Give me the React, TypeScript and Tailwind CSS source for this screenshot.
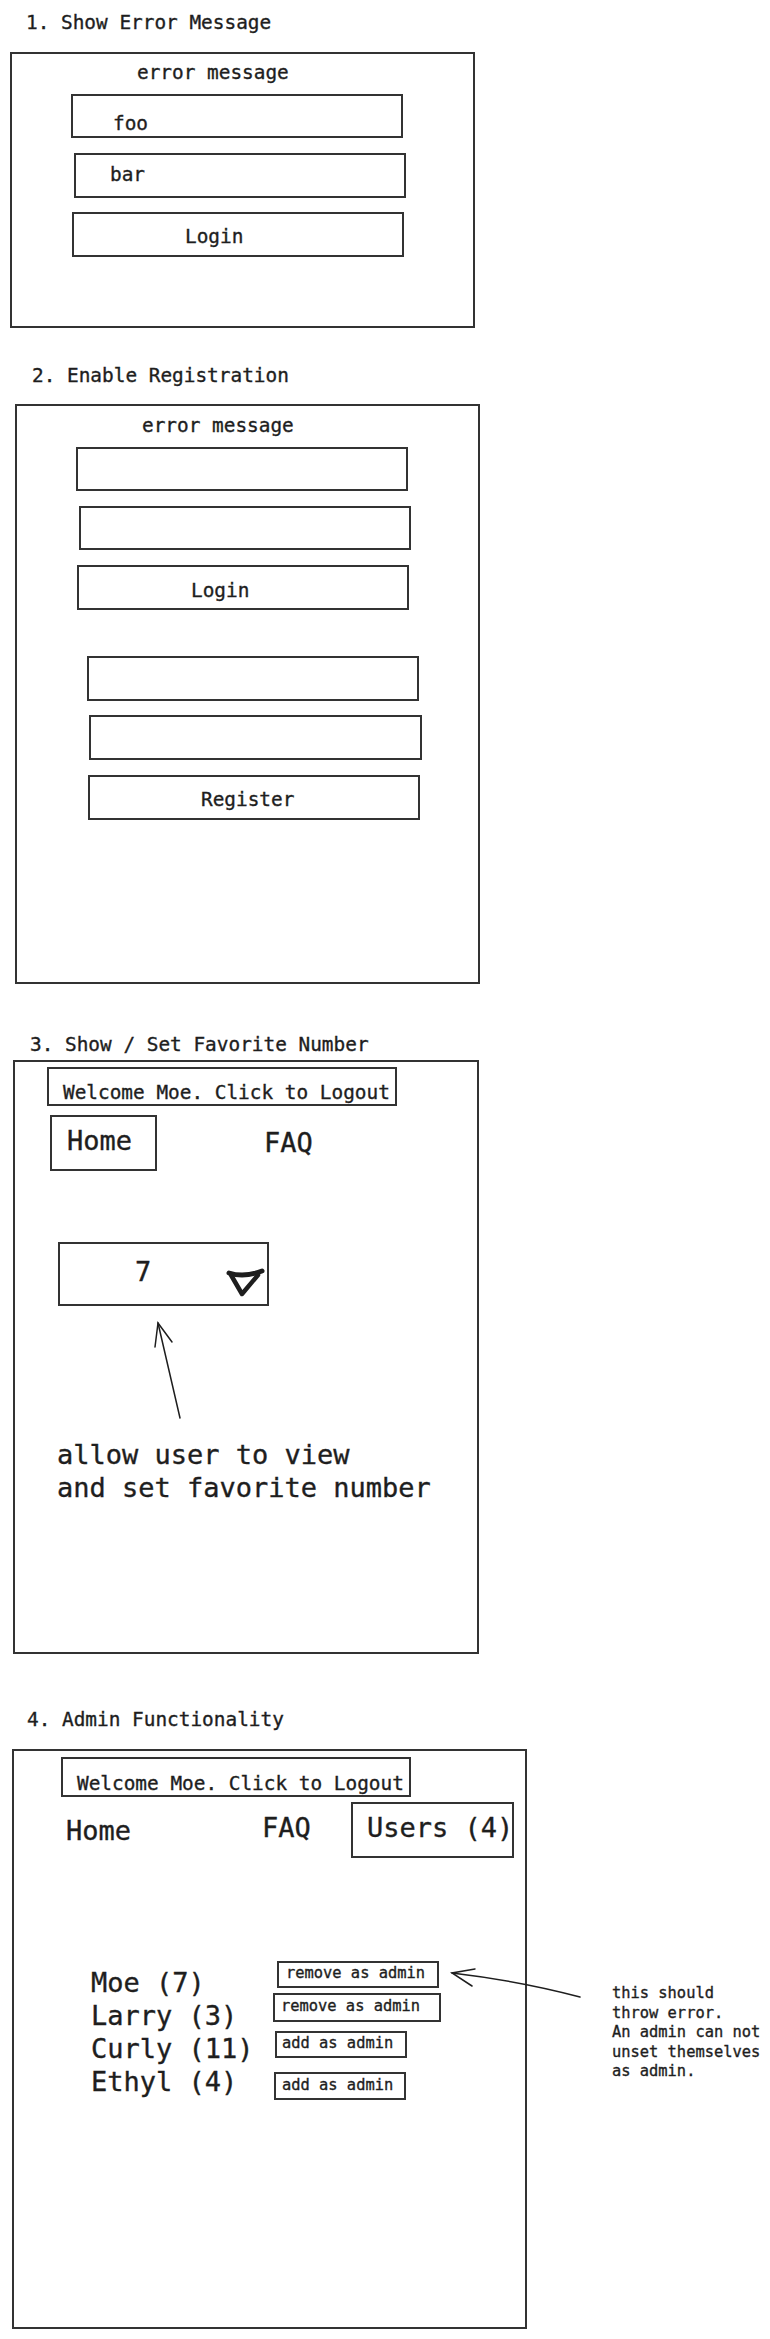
import React from "react";

// Wireframe board: four numbered sketches of the login / admin flow.
const box = "border-2 border-[#333]";

function Chevron() {
  return (
    <svg
      className="absolute left-[166px] top-[24px] h-[30px] w-[40px]"
      viewBox="0 0 40 30"
      fill="none"
      stroke="#1e1e1e"
      strokeLinecap="round"
      strokeLinejoin="round"
    >
      <path d="M3 5 Q18 10 36 3" strokeWidth="5" />
      <path d="M5 7 L16 26 L32 7" strokeWidth="4.5" />
    </svg>
  );
}

export default function App() {
  return (
    <div className="relative h-[2339px] w-[770px] overflow-hidden bg-white text-[#1e1e1e] [font-family:DejaVu_Sans_Mono,monospace] [-webkit-text-stroke:0.35px_#1e1e1e]">
      {/* 1. error message */}
      <section>
        <h2 className="h-[52px] pl-[26px] pt-[11px] text-[19.4px] leading-[24px]">1. Show Error Message</h2>
        <div className={`ml-[10px] h-[276px] w-[465px] ${box} text-[19.4px] leading-[24px]`}>
          <p className="ml-[125px] mt-[7px]">error message</p>
          <div className={`ml-[59px] mt-[9px] h-[44px] w-[332px] pl-[40px] pt-[16px] ${box}`}>foo</div>
          <div className={`ml-[62px] mt-[15px] h-[45px] w-[332px] pl-[34px] pt-[8px] ${box}`}>bar</div>
          <div className={`ml-[60px] mt-[14px] h-[45px] w-[332px] pl-[111px] pt-[11px] ${box}`}>Login</div>
        </div>
      </section>

      {/* 2. registration */}
      <section>
        <h2 className="h-[76px] pl-[32px] pt-[36px] text-[19.4px] leading-[24px]">2. Enable Registration</h2>
        <div className={`ml-[15px] h-[580px] w-[465px] ${box} text-[19.4px] leading-[24px]`}>
          <p className="ml-[125px] mt-[8px]">error message</p>
          <div className={`ml-[59px] mt-[9px] h-[44px] w-[332px] ${box}`} />
          <div className={`ml-[62px] mt-[15px] h-[44px] w-[332px] ${box}`} />
          <div className={`ml-[60px] mt-[15px] h-[45px] w-[332px] pl-[112px] pt-[12px] ${box}`}>Login</div>
          <div className={`ml-[70px] mt-[46px] h-[45px] w-[332px] ${box}`} />
          <div className={`ml-[72px] mt-[14px] h-[45px] w-[333px] ${box}`} />
          <div className={`ml-[71px] mt-[15px] h-[45px] w-[332px] pl-[111px] pt-[11px] ${box}`}>Register</div>
        </div>
      </section>

      {/* 3. favorite number */}
      <section>
        <h2 className="h-[76px] pl-[30px] pt-[49px] text-[19.4px] leading-[24px]">3. Show / Set Favorite Number</h2>
        <div className={`relative ml-[13px] h-[594px] w-[466px] ${box}`}>
          <div className={`ml-[32px] mt-[5px] h-[39px] w-[350px] pl-[14px] pt-[12px] text-[19.4px] leading-[24px] ${box}`}>
            Welcome Moe. Click to Logout
          </div>
          <div className="mt-[9px] flex items-start text-[27px] leading-[32px]">
            <div className={`ml-[35px] h-[56px] w-[107px] pl-[15px] pt-[8px] ${box}`}>Home</div>
            <span className="ml-[107px] mt-[12px]">FAQ</span>
          </div>
          <div className={`relative ml-[43px] mt-[71px] h-[64px] w-[211px] pl-[75px] pt-[12px] text-[27px] leading-[32px] ${box}`}>
            7
            <Chevron />
          </div>
          <p className="ml-[42px] mt-[132px] text-[27px] leading-[33px]">
            allow user to view
            <br />
            and set favorite number
          </p>
          <svg
            className="pointer-events-none absolute left-[135px] top-[255px] h-[110px] w-[40px]"
            viewBox="0 0 40 110"
            fill="none"
            stroke="#1e1e1e"
            strokeWidth="1.5"
            strokeLinecap="round"
          >
            <path d="M30 101 L8 6" />
            <path d="M5 30 L8 6 L22 25" />
          </svg>
        </div>
      </section>

      {/* 4. admin */}
      <section className="relative">
        <h2 className="h-[95px] pl-[27px] pt-[54px] text-[19.4px] leading-[24px]">4. Admin Functionality</h2>
        <div className="flex items-start">
          <div className={`ml-[12px] h-[580px] w-[515px] shrink-0 ${box}`}>
            <div className={`ml-[47px] mt-[6px] h-[40px] w-[350px] pl-[14px] pt-[13px] text-[19.4px] leading-[24px] ${box}`}>
              Welcome Moe. Click to Logout
            </div>
            <div className="mt-[5px] flex items-start text-[27px] leading-[32px]">
              <span className="ml-[52px] mt-[13px] w-[196px] shrink-0">Home</span>
              <span className="mt-[10px] w-[89px] shrink-0">FAQ</span>
              <div className={`h-[56px] w-[163px] shrink-0 whitespace-nowrap pl-[14px] pt-[8px] ${box}`}>Users (4)</div>
            </div>
            <div className="mt-[103px] flex items-start">
              <ul className="ml-[77px] mt-[5px] w-[182px] shrink-0 text-[27px] leading-[33px]">
                <li>Moe (7)</li>
                <li>Larry (3)</li>
                <li>Curly (11)</li>
                <li>Ethyl (4)</li>
              </ul>
              <div className="flex flex-col items-start whitespace-nowrap text-[15.4px] leading-[20px]">
                <div className={`ml-[4px] h-[27px] w-[162px] pl-[7px] ${box}`}>remove as admin</div>
                <div className={`mt-[5px] h-[29px] w-[168px] pl-[6px] pt-[1px] ${box}`}>remove as admin</div>
                <div className={`ml-[2px] mt-[9px] h-[27px] w-[132px] pl-[5px] ${box}`}>add as admin</div>
                <div className={`ml-[1px] mt-[14px] h-[28px] w-[132px] pl-[6px] pt-[1px] ${box}`}>add as admin</div>
              </div>
            </div>
          </div>
          <p className="ml-[85px] mt-[235px] whitespace-nowrap text-[15.4px] leading-[19.5px]">
            this should
            <br />
            throw error.
            <br />
            An admin can not
            <br />
            unset themselves
            <br />
            as admin.
          </p>
        </div>
        <svg
          className="pointer-events-none absolute left-[445px] top-[305px] h-[45px] w-[145px]"
          viewBox="0 0 145 45"
          fill="none"
          stroke="#1e1e1e"
          strokeWidth="1.5"
          strokeLinecap="round"
        >
          <path d="M135 38 Q75 22 7 14" />
          <path d="M30 10 L7 14 L27 27" />
        </svg>
      </section>
    </div>
  );
}
